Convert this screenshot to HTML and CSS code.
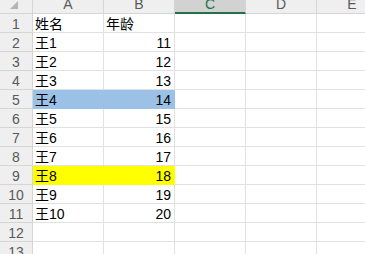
FILE: index.html
```html
<!DOCTYPE html>
<html lang="zh-CN">
<head>
<meta charset="utf-8">
<link rel="stylesheet" href="styles.css">
</head>
<body>
<div class="sheet">
  <div class="corner hdr"><svg class="tri" width="8" height="8" viewBox="0 0 8 8"><polygon points="8,0 8,8 0,8" fill="#b4b4b4"/></svg></div>
  <div class="col hdr">A</div>
  <div class="col hdr">B</div>
  <div class="col hdr sel">C</div>
  <div class="col hdr">D</div>
  <div class="col hdr">E</div>

  <div class="rn hdr">1</div><div class="c">姓名</div><div class="c">年龄</div><div class="c"></div><div class="c"></div><div class="c"></div>
  <div class="rn hdr">2</div><div class="c">王1</div><div class="c n">11</div><div class="c"></div><div class="c"></div><div class="c"></div>
  <div class="rn hdr">3</div><div class="c">王2</div><div class="c n">12</div><div class="c"></div><div class="c"></div><div class="c"></div>
  <div class="rn hdr">4</div><div class="c">王3</div><div class="c n">13</div><div class="c"></div><div class="c"></div><div class="c"></div>
  <div class="rn hdr">5</div><div class="c blue">王4</div><div class="c n blue">14</div><div class="c"></div><div class="c"></div><div class="c"></div>
  <div class="rn hdr">6</div><div class="c">王5</div><div class="c n">15</div><div class="c"></div><div class="c"></div><div class="c"></div>
  <div class="rn hdr">7</div><div class="c">王6</div><div class="c n">16</div><div class="c"></div><div class="c"></div><div class="c"></div>
  <div class="rn hdr">8</div><div class="c">王7</div><div class="c n">17</div><div class="c"></div><div class="c"></div><div class="c"></div>
  <div class="rn hdr">9</div><div class="c yellow">王8</div><div class="c n yellow">18</div><div class="c"></div><div class="c"></div><div class="c"></div>
  <div class="rn hdr">10</div><div class="c">王9</div><div class="c n">19</div><div class="c"></div><div class="c"></div><div class="c"></div>
  <div class="rn hdr">11</div><div class="c">王10</div><div class="c n">20</div><div class="c"></div><div class="c"></div><div class="c"></div>
  <div class="rn hdr">12</div><div class="c"></div><div class="c"></div><div class="c"></div><div class="c"></div><div class="c"></div>
  <div class="rn hdr">13</div><div class="c"></div><div class="c"></div><div class="c"></div><div class="c"></div><div class="c"></div>
</div>
</body>
</html>
```
FILE: styles.css
```css
html, body {
  margin: 0;
  padding: 0;
  background: #ffffff;
  overflow: hidden;
}
.sheet {
  display: grid;
  grid-template-columns: 33px 71px 71px 71px 71px 71px;
  grid-template-rows: 14px;
  grid-auto-rows: 19px;
  width: 365px;
  height: 254px;
  overflow: hidden;
  font-family: "Liberation Sans", "Noto Sans CJK SC", sans-serif;
  font-size: 14px;
  color: #000;
}
.sheet > div {
  box-sizing: border-box;
  border-right: 1px solid #e1e1e1;
  border-bottom: 1px solid #e1e1e1;
  overflow: hidden;
  white-space: nowrap;
}
.sheet > .hdr {
  background: #efefef;
  border-color: #d5d5d5;
  color: #595959;
}
.corner {
  display: flex;
  justify-content: flex-end;
  align-items: flex-end;
  padding: 0 14px 4px 0;
}
.tri {
  display: block;
}
.col {
  text-align: center;
  line-height: 8px;
}
.sheet > .sel {
  background: #d2d2d2;
  border-bottom: 2px solid #217346;
  color: #217346;
}
.rn {
  text-align: center;
  line-height: 21px;
}
.c {
  padding: 0 3px 0 2px;
  line-height: 21px;
}
.n {
  text-align: right;
}
.sheet > .blue {
  background: #9bc2e6;
  border-color: #9bc2e6;
}
.sheet > .yellow {
  background: #ffff00;
  border-color: #ffff00;
}
```
